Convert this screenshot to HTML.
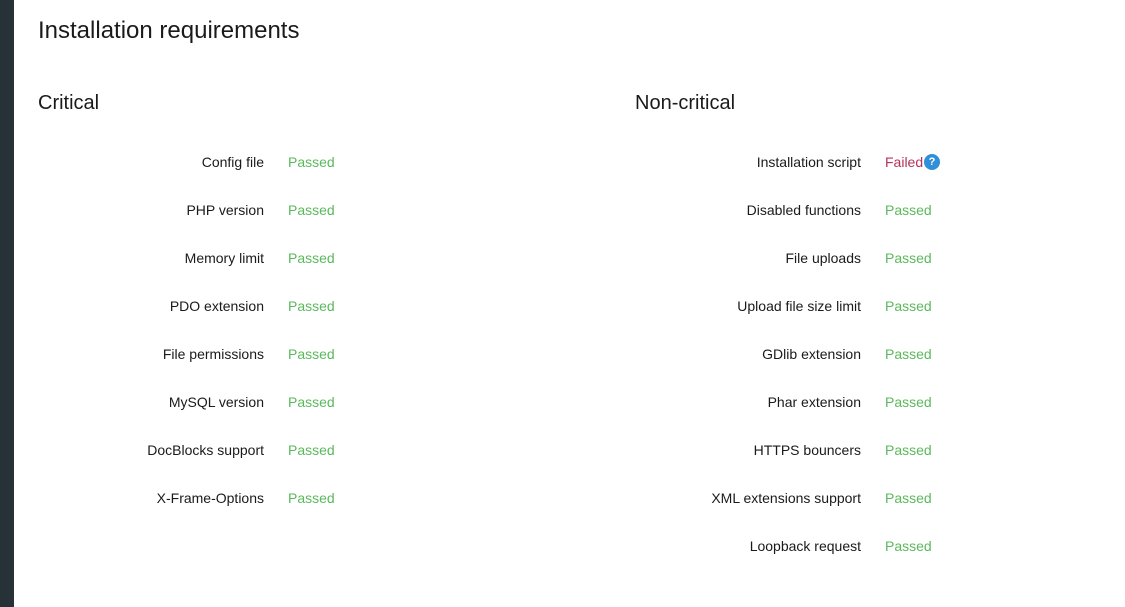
<!DOCTYPE html>
<html><head><meta charset="utf-8"><style>
body{margin:0;width:1125px;height:607px;background:#fff;font-family:"Liberation Sans",sans-serif;color:#1a1a1a;position:relative;overflow:hidden}
.sb{position:absolute;left:0;top:0;width:14px;height:607px;background:#263238}
h1{position:absolute;left:38px;top:17px;margin:0;font-size:24px;font-weight:normal}
h2{position:absolute;margin:0;font-size:20px;font-weight:normal;top:92px}
.r{position:absolute;font-size:14px;line-height:20px}
.l{position:absolute;text-align:right;width:300px}
.p{position:absolute;color:#5cb85c}
.f{color:#b5335a}
.q{position:absolute;left:39px;top:2px;width:16px;height:16px;border-radius:50%;background:#2f8fd8;color:#fff;font-size:11px;font-weight:bold;text-align:center;line-height:16px}
</style></head><body>
<div class="sb"></div>
<h1>Installation requirements</h1>
<h2 style="left:38px">Critical</h2>
<h2 style="left:635px">Non-critical</h2>
<div class="r" style="left:0;top:0">
<div class="l" style="left:-36px;top:152px">Config file</div><div class="p" style="left:288px;top:152px">Passed</div>
<div class="l" style="left:-36px;top:200px">PHP version</div><div class="p" style="left:288px;top:200px">Passed</div>
<div class="l" style="left:-36px;top:248px">Memory limit</div><div class="p" style="left:288px;top:248px">Passed</div>
<div class="l" style="left:-36px;top:296px">PDO extension</div><div class="p" style="left:288px;top:296px">Passed</div>
<div class="l" style="left:-36px;top:344px">File permissions</div><div class="p" style="left:288px;top:344px">Passed</div>
<div class="l" style="left:-36px;top:392px">MySQL version</div><div class="p" style="left:288px;top:392px">Passed</div>
<div class="l" style="left:-36px;top:440px">DocBlocks support</div><div class="p" style="left:288px;top:440px">Passed</div>
<div class="l" style="left:-36px;top:488px">X-Frame-Options</div><div class="p" style="left:288px;top:488px">Passed</div>

<div class="l" style="left:561px;top:152px">Installation script</div><div class="p f" style="left:885px;top:152px;white-space:nowrap">Failed<span class="q">?</span></div>
<div class="l" style="left:561px;top:200px">Disabled functions</div><div class="p" style="left:885px;top:200px">Passed</div>
<div class="l" style="left:561px;top:248px">File uploads</div><div class="p" style="left:885px;top:248px">Passed</div>
<div class="l" style="left:561px;top:296px">Upload file size limit</div><div class="p" style="left:885px;top:296px">Passed</div>
<div class="l" style="left:561px;top:344px">GDlib extension</div><div class="p" style="left:885px;top:344px">Passed</div>
<div class="l" style="left:561px;top:392px">Phar extension</div><div class="p" style="left:885px;top:392px">Passed</div>
<div class="l" style="left:561px;top:440px">HTTPS bouncers</div><div class="p" style="left:885px;top:440px">Passed</div>
<div class="l" style="left:561px;top:488px">XML extensions support</div><div class="p" style="left:885px;top:488px">Passed</div>
<div class="l" style="left:561px;top:536px">Loopback request</div><div class="p" style="left:885px;top:536px">Passed</div>
</div>
</body></html>
